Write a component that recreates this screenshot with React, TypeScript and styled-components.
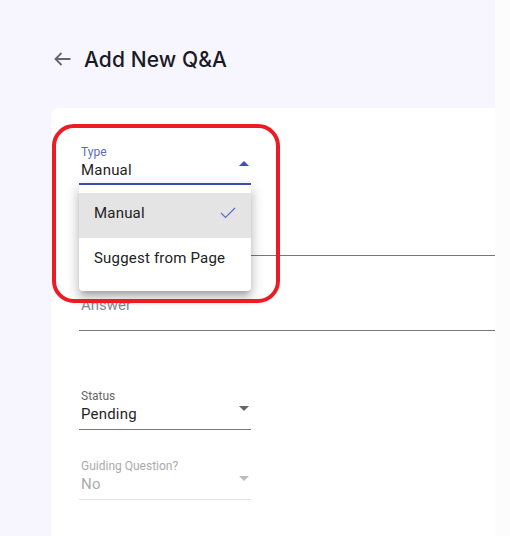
import styled, { createGlobalStyle } from "styled-components";

const GlobalStyle = createGlobalStyle`
  html, body {
    margin: 0;
    padding: 0;
    background: #f7f6fe;
    font-family: Roboto, "Liberation Sans", sans-serif;
  }
  * { box-sizing: border-box; }
`;

const colors = {
  page: "#f7f6fe",
  blue: "#3f51b5",
  blueLight: "#5c6bc0",
  text: "#1f1f1f",
  grey: "#666666",
  line: "#777777",
  disabled: "#ababab",
  red: "#ed1c24",
};

const Page = styled.div`
  display: flex;
  width: 510px;
  height: 536px;
  overflow: hidden;
`;

const Main = styled.main`
  flex: 1;
  display: flex;
  flex-direction: column;
  padding: 40px 0 0 51px;
  min-width: 0;
`;

const Gutter = styled.div`
  width: 15px;
  flex-shrink: 0;
  background: #fcfcfd;
`;

const Header = styled.div`
  display: flex;
  align-items: center;
  height: 38px;
  margin-bottom: 30px;
  padding-left: 3px;
  gap: 13px;

  h1 {
    margin: 0;
    font-family: Inter, "Open Sans", sans-serif;
    font-weight: 500;
    font-size: 21px;
    color: #1a1a26;
    letter-spacing: 0.1px;
  }
`;

const BackButton = styled.button`
  display: flex;
  padding: 0;
  border: 0;
  background: none;
  color: ${colors.grey};
  cursor: pointer;
`;

const Card = styled.section`
  position: relative;
  flex: 1;
  background: #ffffff;
  border-top-left-radius: 8px;
  padding: 37px 0 0 28px;
`;

const Highlight = styled.div`
  position: absolute;
  left: 1px;
  top: 16px;
  width: 228px;
  height: 179px;
  border: 4px solid ${colors.red};
  border-radius: 22px;
  pointer-events: none;
  z-index: 3;
`;

const SelectWrap = styled.div<{ $gap?: number }>`
  position: relative;
  width: 172px;
  margin-top: ${(p) => p.$gap ?? 0}px;
`;

const SelectBox = styled.div<{ $focused?: boolean; $disabled?: boolean }>`
  position: relative;
  padding-bottom: ${(p) => (p.$focused ? 2 : 4)}px;
  border-bottom: ${(p) =>
    p.$focused
      ? `2px solid ${colors.blue}`
      : p.$disabled
      ? "1px solid #e3e3e3"
      : `1px solid ${colors.line}`};
`;

const Label = styled.div<{ $focused?: boolean; $disabled?: boolean }>`
  padding-left: 2px;
  font-size: 12px;
  line-height: 15px;
  color: ${(p) =>
    p.$focused ? colors.blueLight : p.$disabled ? colors.disabled : colors.grey};
`;

const Value = styled.div<{ $disabled?: boolean }>`
  padding-left: 2px;
  font-size: 15px;
  line-height: 21px;
  letter-spacing: 0.2px;
  color: ${(p) => (p.$disabled ? colors.disabled : colors.text)};
`;

const Caret = styled.span<{ $up?: boolean; $color: string }>`
  position: absolute;
  right: 2px;
  top: ${(p) => (p.$up ? 16 : 17)}px;
  width: 0;
  height: 0;
  border-left: 5px solid transparent;
  border-right: 5px solid transparent;
  ${(p) =>
    p.$up
      ? `border-bottom: 5px solid ${p.$color};`
      : `border-top: 5px solid ${p.$color};`}
`;

const Menu = styled.ul`
  position: absolute;
  top: 100%;
  left: 0;
  width: 172px;
  margin: 0;
  padding: 8px 0;
  list-style: none;
  background: #ffffff;
  border-radius: 0 0 4px 4px;
  box-shadow: 0 5px 5px -3px rgba(0, 0, 0, 0.2), 0 8px 10px 1px rgba(0, 0, 0, 0.14),
    0 3px 14px 2px rgba(0, 0, 0, 0.12);
  z-index: 2;
`;

const MenuItem = styled.li<{ $selected?: boolean }>`
  display: flex;
  align-items: center;
  justify-content: space-between;
  height: 45px;
  padding: 0 15px 5px 15px;
  font-size: 15px;
  color: #222222;
  letter-spacing: 0.2px;
  background: ${(p) => (p.$selected ? "#e4e4e4" : "transparent")};
`;

const TextField = styled.div<{ $height: number }>`
  display: flex;
  align-items: flex-start;
  height: ${(p) => p.$height}px;
  border-bottom: 1px solid ${colors.line};
`;

const Placeholder = styled.span<{ $top: number }>`
  margin-top: ${(p) => p.$top}px;
  padding-left: 2px;
  font-size: 15px;
  line-height: 18px;
  color: #858b94;
`;

const Check = () => (
  <svg width="16" height="12" viewBox="0 0 16 12" fill="none">
    <polyline
      points="1,6 5.5,10.5 15,1"
      stroke={colors.blueLight}
      strokeWidth="1.2"
    />
  </svg>
);

const ArrowBack = () => (
  <svg width="17" height="14" viewBox="0 0 17 14" fill="none">
    <path
      d="M16.5 7H1.5M7.5 1L1.5 7l6 6"
      stroke="currentColor"
      strokeWidth="1.8"
    />
  </svg>
);

const typeOptions = ["Manual", "Suggest from Page"];

export default function App() {
  return (
    <Page>
      <GlobalStyle />
      <Main>
        <Header>
          <BackButton aria-label="Back">
            <ArrowBack />
          </BackButton>
          <h1>Add New Q&amp;A</h1>
        </Header>

        <Card>
          <Highlight />

          <SelectWrap>
            <SelectBox $focused>
              <Label $focused>Type</Label>
              <Value>Manual</Value>
              <Caret $up $color={colors.blue} />
            </SelectBox>
            <Menu>
              {typeOptions.map((o) => (
                <MenuItem key={o} $selected={o === "Manual"}>
                  {o}
                  {o === "Manual" && <Check />}
                </MenuItem>
              ))}
            </Menu>
          </SelectWrap>

          <TextField $height={71}>
            <Placeholder $top={42}>Question</Placeholder>
          </TextField>
          <TextField $height={75}>
            <Placeholder $top={40}>Answer</Placeholder>
          </TextField>

          <SelectWrap $gap={58}>
            <SelectBox>
              <Label>Status</Label>
              <Value>Pending</Value>
              <Caret $color={colors.grey} />
            </SelectBox>
          </SelectWrap>

          <SelectWrap $gap={29}>
            <SelectBox $disabled>
              <Label $disabled>Guiding Question?</Label>
              <Value $disabled>No</Value>
              <Caret $color="#bdbdbd" />
            </SelectBox>
          </SelectWrap>
        </Card>
      </Main>
      <Gutter />
    </Page>
  );
}
